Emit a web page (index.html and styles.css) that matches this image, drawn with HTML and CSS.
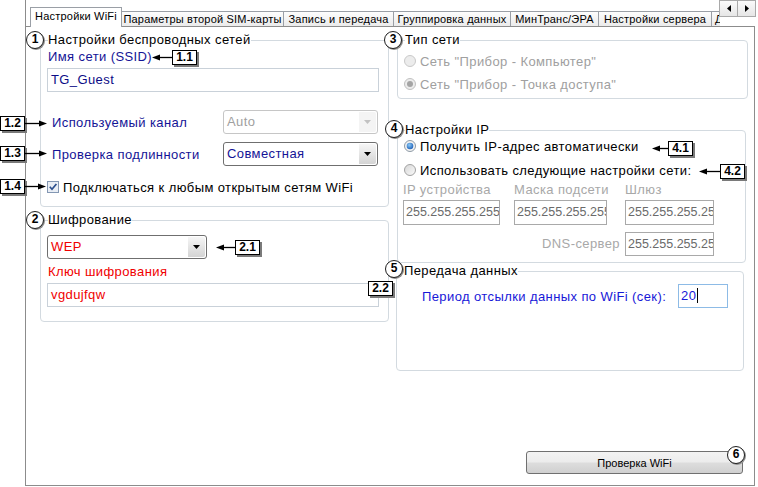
FILE: index.html
```html
<!DOCTYPE html>
<html lang="ru">
<head>
<meta charset="utf-8">
<title>Настройки WiFi</title>
<link rel="stylesheet" href="styles.css">
</head>
<body>
<div class="app">
  <div class="tabstrip">
    <div class="tabs">
      <div class="tab active t1">Настройки WiFi</div>
      <div class="tab t2">Параметры второй SIM-карты</div>
      <div class="tab t3">Запись и передача</div>
      <div class="tab t4">Группировка данных</div>
      <div class="tab t5">МинТранс/ЭРА</div>
      <div class="tab t6">Настройки сервера</div>
      <div class="tab t7">Дополнительно</div>
    </div>
    <div class="scroller">
      <span class="sbtn"><svg width="4" height="7" viewBox="0 0 4 7"><path d="M4 0 V7 L0 3.5 Z" fill="#000"/></svg></span>
      <span class="sbtn"><svg width="4" height="7" viewBox="0 0 4 7"><path d="M0 0 V7 L4 3.5 Z" fill="#000"/></svg></span>
    </div>
  </div>

  <div class="page">
    <div class="col col-left">
      <fieldset class="group g-wireless">
        <legend>Настройки беспроводных сетей</legend>
        <div class="caption navy ssid-cap">Имя сети (SSID)</div>
        <div class="field field-wide ssid-field">TG_Guest</div>
        <div class="row row-channel">
          <span class="row-label navy">Используемый канал</span>
          <div class="combo combo-side is-disabled">
            <span class="combo-text">Auto</span>
            <span class="combo-btn"><svg width="7" height="4" viewBox="0 0 7 4"><path d="M0 0 H7 L3.5 4 Z" fill="#c2c2c2"/></svg></span>
          </div>
        </div>
        <div class="row row-auth">
          <span class="row-label navy">Проверка подлинности</span>
          <div class="combo combo-side navy">
            <span class="combo-text">Совместная</span>
            <span class="combo-btn"><svg width="7" height="4" viewBox="0 0 7 4"><path d="M0 0 H7 L3.5 4 Z" fill="#000"/></svg></span>
          </div>
        </div>
        <div class="check">
          <svg width="12" height="12" viewBox="0 0 12 12"><rect x="0.5" y="0.5" width="11" height="11" fill="#e9eef5" stroke="#8397b3"/><path d="M2.8 5.8 L5 8.3 L9.4 3" fill="none" stroke="#2b4f8e" stroke-width="1.7"/></svg>
          <span>Подключаться к любым открытым сетям WiFi</span>
        </div>
      </fieldset>

      <fieldset class="group g-cipher">
        <legend>Шифрование</legend>
        <div class="combo combo-cipher red">
          <span class="combo-text">WEP</span>
          <span class="combo-btn"><svg width="7" height="4" viewBox="0 0 7 4"><path d="M0 0 H7 L3.5 4 Z" fill="#000"/></svg></span>
        </div>
        <div class="caption red key-cap">Ключ шифрования</div>
        <div class="field field-wide key-field red">vgdujfqw</div>
      </fieldset>
    </div>

    <div class="col col-right">
      <fieldset class="group g-net">
        <legend>Тип сети</legend>
        <div class="radio muted radio-first">
          <svg width="12" height="12" viewBox="0 0 12 12"><circle cx="6" cy="6" r="5.5" fill="#ececec" stroke="#c8c8c8"/></svg>
          <span>Сеть "Прибор - Компьютер"</span>
        </div>
        <div class="radio muted radio-next">
          <svg width="12" height="12" viewBox="0 0 12 12"><circle cx="6" cy="6" r="5.5" fill="#ececec" stroke="#c0c0c0"/><circle cx="6" cy="6" r="3" fill="#a4a4a4"/></svg>
          <span>Сеть "Прибор - Точка доступа"</span>
        </div>
      </fieldset>

      <fieldset class="group g-ip">
        <legend>Настройки IP</legend>
        <div class="radio">
          <svg width="12" height="12" viewBox="0 0 12 12"><defs><radialGradient id="rb" cx="0.4" cy="0.35" r="0.7"><stop offset="0" stop-color="#8ccaf7"/><stop offset="1" stop-color="#1a5cb5"/></radialGradient></defs><circle cx="6" cy="6" r="5.5" fill="#f2f2f2" stroke="#8e9aa6"/><circle cx="6" cy="6" r="3.3" fill="url(#rb)"/></svg>
          <span>Получить IP-адрес автоматически</span>
        </div>
        <div class="radio radio-next2">
          <svg width="12" height="12" viewBox="0 0 12 12"><defs><linearGradient id="rg" x1="0" y1="0" x2="1" y2="1"><stop offset="0" stop-color="#d6d6d6"/><stop offset="1" stop-color="#fbfbfb"/></linearGradient></defs><circle cx="6" cy="6" r="5.5" fill="url(#rg)" stroke="#a2a2a2"/></svg>
          <span>Использовать следующие настройки сети:</span>
        </div>
        <div class="ipgrid">
          <span class="ip-label">IP устройства</span>
          <span class="ip-label">Маска подсети</span>
          <span class="ip-label">Шлюз</span>
          <div class="field ip-field ip-w1">255.255.255.255</div>
          <div class="field ip-field ip-w2">255.255.255.255</div>
          <div class="field ip-field ip-w3">255.255.255.255</div>
          <span class="ip-label dns-label">DNS-сервер</span>
          <div class="field ip-field ip-w3 dns-field">255.255.255.255</div>
        </div>
      </fieldset>

      <fieldset class="group g-data">
        <legend>Передача данных</legend>
        <div class="period">
          <span class="period-label">Период отсылки данных по WiFi (сек):</span>
          <div class="field period-field"><span class="caret">20</span></div>
        </div>
      </fieldset>

      <button class="btn" type="button">Проверка WiFi</button>
    </div>
  </div>

  <span class="marker m1">1</span>
  <span class="marker m2">2</span>
  <span class="marker m3">3</span>
  <span class="marker m4">4</span>
  <span class="marker m5">5</span>
  <span class="marker m6">6</span>

  <div class="callout c11">
    <svg width="20" height="7" viewBox="0 0 20 7"><path d="M0 3.5 L8 0.5 V6.5 Z" fill="#000"/><line x1="7" y1="3.5" x2="20" y2="3.5" stroke="#000" stroke-width="1.3"/></svg>
    <span class="tag">1.1</span>
  </div>
  <div class="callout c12">
    <span class="tag">1.2</span>
    <svg width="22" height="7" viewBox="0 0 22 7"><line x1="0" y1="3.5" x2="15" y2="3.5" stroke="#000" stroke-width="1.3"/><path d="M22 3.5 L14 0.5 V6.5 Z" fill="#000"/></svg>
  </div>
  <div class="callout c13">
    <span class="tag">1.3</span>
    <svg width="22" height="7" viewBox="0 0 22 7"><line x1="0" y1="3.5" x2="15" y2="3.5" stroke="#000" stroke-width="1.3"/><path d="M22 3.5 L14 0.5 V6.5 Z" fill="#000"/></svg>
  </div>
  <div class="callout c14">
    <span class="tag">1.4</span>
    <svg width="21" height="7" viewBox="0 0 21 7"><line x1="0" y1="3.5" x2="14" y2="3.5" stroke="#000" stroke-width="1.3"/><path d="M21 3.5 L13 0.5 V6.5 Z" fill="#000"/></svg>
  </div>
  <div class="callout c21">
    <svg width="19" height="7" viewBox="0 0 19 7"><path d="M0 3.5 L8 0.5 V6.5 Z" fill="#000"/><line x1="7" y1="3.5" x2="19" y2="3.5" stroke="#000" stroke-width="1.3"/></svg>
    <span class="tag">2.1</span>
  </div>
  <div class="callout c22">
    <span class="tag">2.2</span>
  </div>
  <div class="callout c41">
    <svg width="16" height="7" viewBox="0 0 16 7"><path d="M0 3.5 L8 0.5 V6.5 Z" fill="#000"/><line x1="7" y1="3.5" x2="16" y2="3.5" stroke="#000" stroke-width="1.3"/></svg>
    <span class="tag">4.1</span>
  </div>
  <div class="callout c42">
    <svg width="21" height="7" viewBox="0 0 21 7"><path d="M0 3.5 L8 0.5 V6.5 Z" fill="#000"/><line x1="7" y1="3.5" x2="21" y2="3.5" stroke="#000" stroke-width="1.3"/></svg>
    <span class="tag">4.2</span>
  </div>
</div>
</body>
</html>
```

FILE: styles.css
```css
* { box-sizing: border-box; }
html, body { margin: 0; padding: 0; background: #fff; }
body {
  font-family: "Liberation Sans", Arial, sans-serif;
  font-size: 13px;
  letter-spacing: .4px;
  color: #000;
}
.app { position: relative; width: 758px; height: 487px; overflow: hidden; background: #fff; }

/* ---------- tab strip ---------- */
.tabstrip {
  position: relative;
  z-index: 2;
  display: flex;
  height: 26px;
  width: 731px;
  margin-left: 25px;
  border-left: 1px solid #8c8c8c;
}
.tabs {
  flex: 1;
  display: flex;
  align-items: flex-end;
  height: 27px;
  padding-left: 4px;
  overflow: hidden;
}
.tab {
  flex: none;
  height: 15px;
  margin-bottom: 1px;
  margin-right: -1px;
  padding: 0;
  border: 1px solid #9a9fa6;
  border-bottom: 0;
  background: linear-gradient(#fdfdfd, #ebebeb);
  font-size: 11px;
  line-height: 14px;
  letter-spacing: .2px;
  text-align: center;
  white-space: nowrap;
  overflow: hidden;
}
.tab.active {
  position: relative;
  z-index: 1;
  height: 20px;
  margin-bottom: 0;
  padding-top: 2px;
  background: #fff;
  line-height: 13px;
}
.t1 { width: 92px; }
.t2 { width: 163px; }
.t3 { width: 111px; }
.t4 { width: 118px; }
.t5 { width: 89px; }
.t6 { width: 114px; }
.t7 { width: 90px; padding-left: 3px; text-align: left; }

.scroller { flex: none; display: flex; height: 17px; }
.sbtn {
  width: 19px;
  height: 17px;
  display: flex;
  align-items: center;
  justify-content: center;
  border: 1px solid #a9a9a9;
  background: linear-gradient(#fafafa, #e6e6e6);
  margin-left: -1px;
}

/* ---------- page ---------- */
.page {
  position: relative;
  z-index: 1;
  width: 730px;
  height: 460px;
  margin-left: 25px;
  border: 1px solid #8c8c8c;
  background: #fff;
  display: grid;
  grid-template-columns: 349px 351px;
  column-gap: 8px;
  padding: 5px 0 0 14px;
}
.col { display: flex; flex-direction: column; min-width: 0; }

.group {
  margin: 0;
  padding: 0 7px;
  min-width: 0;
  border: 1px solid #d3dae0;
  border-radius: 4px;
}
.group legend { padding: 0; line-height: 16px; font-size: 13px; }

.g-wireless { height: 175px; }
.g-cipher { height: 110px; margin-top: 5px; }
.g-net { height: 67px; }
.g-ip { height: 141px; width: 349px; margin-top: 23px; }
.g-data { height: 108px; width: 348px; margin-left: -1px; }

.navy { color: #141496; }
.red { color: #f00000; }
.muted { color: #a0a0a0; }

.caption { line-height: 16px; }
.ssid-cap { margin-top: 1px; }
.key-cap { margin-top: 5px; }

.field {
  height: 24px;
  border: 1px solid #c9d1d9;
  padding: 0 3px;
  line-height: 22px;
  background: #fff;
  white-space: nowrap;
  overflow: hidden;
}
.field-wide { width: 332px; margin-left: -1px; }
.ssid-field { margin-top: 3px; color: #0c0c86; }
.key-field { margin-top: 3px; }

.row { display: flex; align-items: center; height: 24px; }
.row-channel { margin-top: 18px; }
.row-auth { margin-top: 8px; }
.row-label { flex: 1; padding-left: 4px; }

.combo {
  display: flex;
  height: 24px;
  border: 1px solid #6f6f6f;
  border-radius: 3px;
  padding-left: 3px;
  line-height: 22px;
  background: #fff;
}
.combo-text { flex: 1; white-space: nowrap; }
.combo-btn {
  width: 17px;
  margin: 1px;
  border-radius: 0 2px 2px 0;
  background: linear-gradient(#f6f6f6, #d4d4d4);
  display: flex;
  align-items: center;
  justify-content: center;
}
.combo.is-disabled { border-color: #c6c6c6; color: #a0a0a0; }
.combo.is-disabled .combo-btn { background: #f4f4f4; }
.combo-side { width: 155px; margin-right: 3px; }
.combo-cipher { width: 160px; margin-left: -1px; margin-top: 7px; }

.check {
  display: flex;
  align-items: center;
  gap: 4px;
  height: 16px;
  margin-top: 13px;
  margin-left: -1px;
}

.radio {
  display: flex;
  align-items: center;
  gap: 4px;
  height: 16px;
  margin-left: -1px;
}
.radio-first { margin-top: 5px; }
.radio-next { margin-top: 7px; }
.radio-next2 { margin-top: 8px; }

.ipgrid {
  display: grid;
  grid-template-columns: 111px 111px 89px;
  grid-template-rows: 16px 27px 31px;
  align-items: end;
  margin-top: 4px;
  margin-left: -2px;
}
.ip-label { color: #a8a8a8; line-height: 16px; white-space: nowrap; }
.ip-field {
  height: 25px;
  border-color: #a9a9a9;
  color: #6a6a6a;
  font-size: 12.5px;
  letter-spacing: 0;
  padding: 0 2px;
  line-height: 23px;
}
.ip-w1 { width: 97px; }
.ip-w2 { width: 93px; }
.ip-w3 { width: 89px; }
.dns-label { grid-column: 1 / 3; text-align: right; padding-right: 5px; align-self: center; padding-top: 7px; }
.dns-field { height: 24px; line-height: 22px; }

.period { display: flex; align-items: center; height: 24px; margin-top: 5px; }
.period-label { margin-left: 18px; color: #1818d8; }
.period-field {
  width: 50px;
  margin-left: auto;
  margin-right: 8px;
  border-color: #8dbbe6;
  color: #1818d8;
  padding-left: 2px;
}
.caret { border-right: 1px solid #000; padding-right: 1px; }

.btn {
  align-self: flex-end;
  width: 217px;
  height: 23px;
  margin: auto 5px 11px 0;
  padding: 0;
  border: 1px solid #707070;
  border-radius: 3px;
  background: linear-gradient(#f3f3f3 0%, #ececec 48%, #dddddd 52%, #d0d0d0 100%);
  font-family: "Liberation Sans", Arial, sans-serif;
  font-size: 11px;
  letter-spacing: 0;
  color: #000;
}

/* ---------- annotations ---------- */
.marker {
  position: absolute;
  z-index: 5;
  width: 18px;
  height: 18px;
  border: 1.5px solid #1e1e1e;
  border-radius: 50%;
  background: #fff;
  box-shadow: 1px 1px 0 #8f8f8f;
  font: bold 12px/15px "Liberation Sans", Arial, sans-serif;
  letter-spacing: 0;
  text-align: center;
}
.m1 { left: 26px; top: 31px; }
.m2 { left: 26px; top: 211px; }
.m3 { left: 384px; top: 31px; }
.m4 { left: 385px; top: 120px; }
.m5 { left: 385px; top: 260px; }
.m6 { left: 727px; top: 446px; }

.callout { position: absolute; z-index: 5; display: flex; align-items: center; }
.callout svg { display: block; }
.tag {
  width: 25px;
  height: 15px;
  border: 1px solid #000;
  background: #fff;
  box-shadow: 2px 2px 0 #7a7a7a;
  font: bold 12px/13px "Liberation Sans", Arial, sans-serif;
  letter-spacing: 0;
  text-align: center;
}
.c11 { left: 152px; top: 50px; }
.c12 { left: 0; top: 116px; }
.c13 { left: 0; top: 146px; }
.c14 { left: 0; top: 179px; }
.c21 { left: 216px; top: 240px; }
.c22 { left: 368px; top: 281px; }
.c41 { left: 652px; top: 141px; }
.c42 { left: 699px; top: 164px; }
```
